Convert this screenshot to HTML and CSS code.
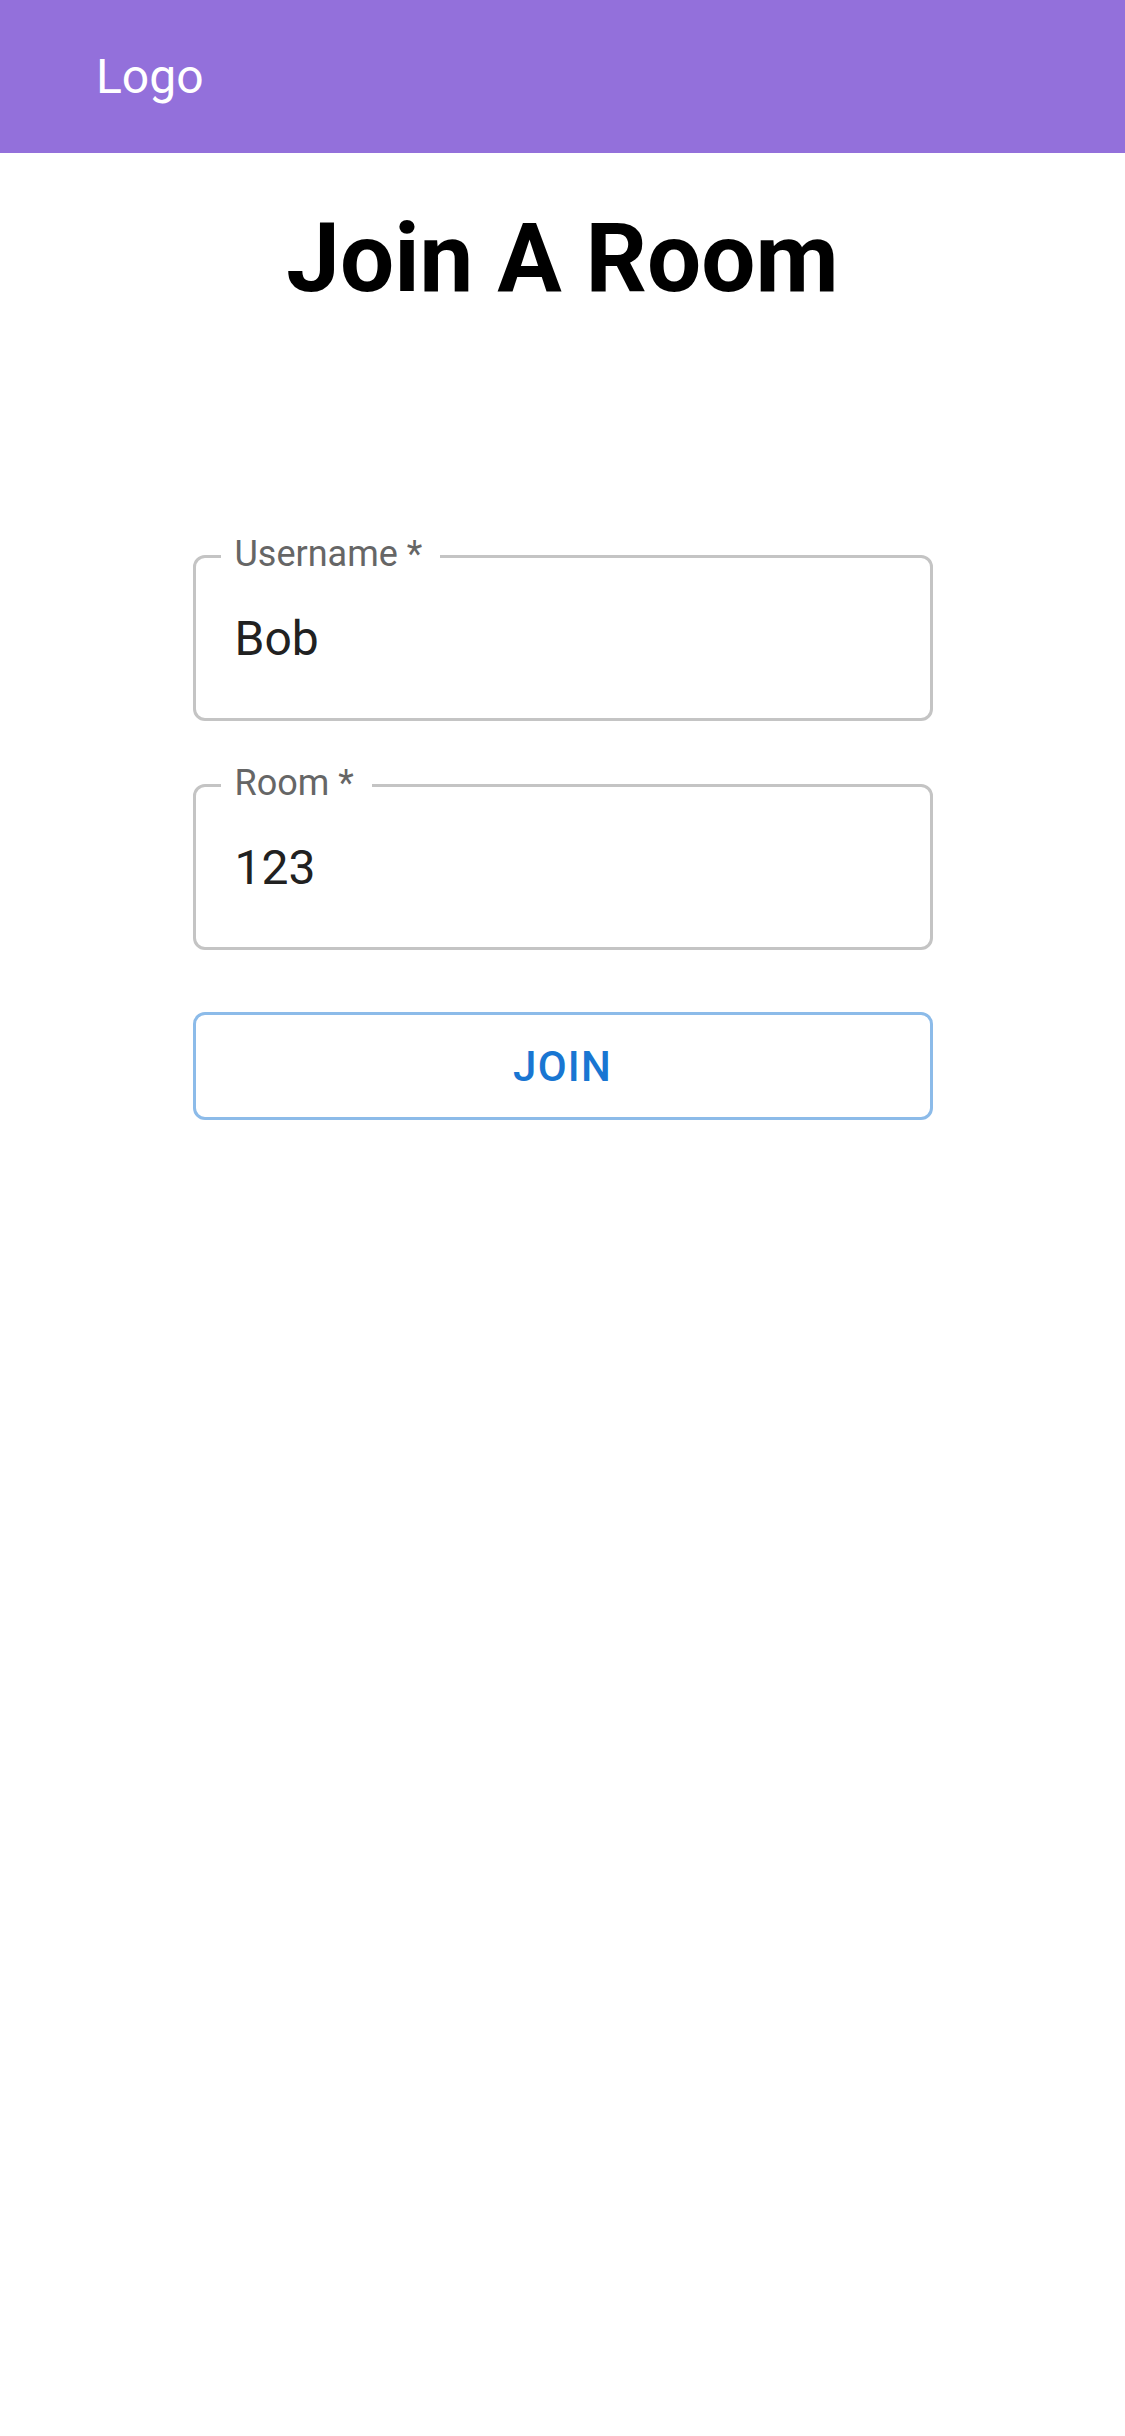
FILE: index.html
```html
<!DOCTYPE html>
<html lang="en">
<head>
<meta charset="utf-8">
<title>Join A Room</title>
<link rel="stylesheet" href="styles.css">
</head>
<body>
<header class="appbar">
  <div class="logo">Logo</div>
</header>
<main class="page">
  <h1 class="title">Join A Room</h1>
  <form class="form">
    <div class="field">
      <span class="field-label">Username *</span>
      <div class="field-value">Bob</div>
    </div>
    <div class="field">
      <span class="field-label">Room *</span>
      <div class="field-value">123</div>
    </div>
    <button type="button" class="join-btn">Join</button>
  </form>
</main>
</body>
</html>
```
FILE: styles.css
```css
html, body {
  margin: 0;
  padding: 0;
  background: #ffffff;
  font-family: Roboto, "Liberation Sans", Arial, sans-serif;
}

.appbar {
  height: 153px;
  background: #9370db;
  display: flex;
  align-items: center;
  padding-left: 96px;
}

.logo {
  color: #ffffff;
  font-size: 48px;
  line-height: 153px;
  font-weight: 400;
}

.page {
  width: 740px;
  margin: 0 auto;
}

.title {
  margin: 48px 0 0;
  font-size: 96px;
  line-height: 1.2;
  font-weight: 700;
  text-align: center;
  color: #000000;
}

.form {
  margin-top: 239px;
  display: flex;
  flex-direction: column;
  gap: 63px;
}

.field {
  position: relative;
  box-sizing: border-box;
  height: 166px;
  border: 3px solid #c4c4c4;
  border-radius: 12px;
}

.field-label {
  position: absolute;
  top: -22px;
  left: 25px;
  padding: 0 18px 0 14px;
  background: #ffffff;
  color: #666666;
  font-size: 36px;
  line-height: 36px;
  white-space: nowrap;
}

.field-value {
  padding: 57px 0 0 39px;
  font-size: 48px;
  line-height: 48px;
  color: #212121;
}

.join-btn {
  box-sizing: border-box;
  height: 108px;
  width: 100%;
  margin-top: -1px;
  border: 3px solid #8cbbe9;
  border-radius: 12px;
  background: #ffffff;
  color: #1976d2;
  font-family: Roboto, "Liberation Sans", Arial, sans-serif;
  font-size: 42px;
  font-weight: 500;
  letter-spacing: 1.2px;
  text-transform: uppercase;
  display: flex;
  align-items: center;
  justify-content: center;
  padding: 0;
}
```
